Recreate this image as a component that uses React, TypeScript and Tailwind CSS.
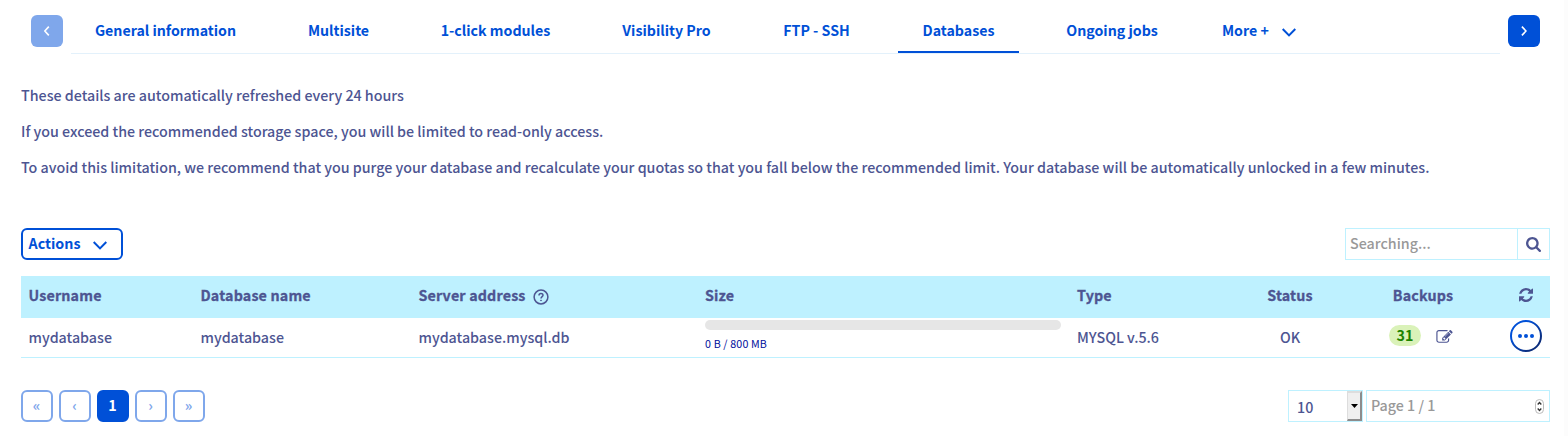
import React from "react";

type Tab = { label: string; width: string; active?: boolean };

const tabs: Tab[] = [
  { label: "General information", width: "w-[189px]" },
  { label: "Multisite", width: "w-[109px]" },
  { label: "1-click modules", width: "w-[157px]" },
  { label: "Visibility Pro", width: "w-[137px]" },
  { label: "FTP - SSH", width: "w-[115px]" },
  { label: "Databases", width: "w-[121px]", active: true },
  { label: "Ongoing jobs", width: "w-[132px] pl-[6px]" },
];

function ChevronDown() {
  return (
    <svg width="14" height="9" viewBox="0 0 14 9" fill="none" stroke="#0050d7" strokeWidth="2">
      <path d="M0.7 1 L7 7.4 L13.3 1" />
    </svg>
  );
}

function ArrowButton({ direction, disabled }: { direction: "left" | "right"; disabled?: boolean }) {
  return (
    <button
      className={`flex h-8 w-8 items-center justify-center rounded-[6px] ${disabled ? "bg-[#7fa7eb]" : "bg-[#0050d7]"}`}
      aria-label={direction}
    >
      <svg width="6" height="10" viewBox="0 0 6 10" fill="none" stroke="#fff" strokeWidth="1.6">
        <path d={direction === "left" ? "M4.8 0.6 L0.8 5 L4.8 9.4" : "M0.900 0.6 L5 5 L0.900 9.4"} />
      </svg>
    </button>
  );
}

function PageButton({ children, current }: { children: React.ReactNode; current?: boolean }) {
  return (
    <button
      className={`flex h-8 w-8 items-center justify-center rounded-[6px] border-2 pr-px pb-[2px] text-[14.3px] font-bold ${
        current ? "border-[#0050d7] bg-[#0050d7] text-white" : "border-[#7fa7eb] bg-white text-[#7fa7eb]"
      }`}
    >
      {children}
    </button>
  );
}

export default function App() {
  return (
    <div className="h-[436px] w-[1568px] overflow-hidden border-r-4 border-[#fcfcfc] bg-white pt-[15px] pl-[21px] font-['Noto_Sans_CJK_SC',sans-serif] text-[14.28px] leading-5 font-medium text-[#4d5592]">
      <nav className="flex h-[39px] pl-[10px]">
        <ArrowButton direction="left" disabled />
        <ul className="ml-2 flex w-[1429px] gap-6 border-b border-[#e3f1fb] text-[14.2px] font-bold text-[#0050d7]">
          {tabs.map((t) => (
            <li
              key={t.label}
              className={`${t.width} flex h-[38px] justify-center whitespace-nowrap border-b-2 pt-[5px] ${
                t.active ? "border-[#0050d7]" : "border-transparent"
              }`}
            >
              {t.label}
            </li>
          ))}
          <li className="flex h-[38px] whitespace-nowrap pt-[5px] pl-[23px]">
            More +
            <span className="mt-[8px] ml-[13px]">
              <ChevronDown />
            </span>
          </li>
        </ul>
        <div className="ml-2">
          <ArrowButton direction="right" />
        </div>
      </nav>

      <section className="mt-[31px] flex flex-col gap-4 whitespace-nowrap">
        <p>These details are automatically refreshed every 24 hours</p>
        <p>If you exceed the recommended storage space, you will be limited to read-only access.</p>
        <p>
          To avoid this limitation, we recommend that you purge your database and recalculate your quotas so that you
          fall below the recommended limit. Your database will be automatically unlocked in a few minutes.
        </p>
      </section>

      <div className="mt-[51px] flex w-[1529px] justify-between">
        <button className="flex h-8 w-[102px] rounded-[6px] border-2 border-[#0050d7] pt-[3px] pl-[5.500px] font-bold text-[#0050d7]">
          Actions
          <span className="mt-[8px] ml-[13px]">
            <ChevronDown />
          </span>
        </button>
        <div className="flex h-8 w-[205px] border border-[#bef1ff]">
          <input
            className="w-[172px] border-r border-[#bef1ff] pb-[2px] pl-1 placeholder:text-[#999] placeholder:opacity-100"
            placeholder="Searching..."
          />
          <button className="flex flex-1 items-center justify-center" aria-label="Search">
            <svg width="15" height="15" viewBox="0 128 1664 1664" fill="#4d5592">
              <path d="M1152 832q0-185-131.500-316.500T704 384 387.500 515.500 256 832t131.500 316.500T704 1280t316.500-131.500T1152 832zm512 832q0 52-38 90t-90 38q-54 0-90-38l-343-342q-179 124-399 124-143 0-273.500-55.500t-225-150-150-225T0 832t55.500-273.500 150-225 225-150T704 128t273.500 55.500 225 150 150 225T1408 832q0 220-124 399l343 343q37 37 37 90z" />
            </svg>
          </button>
        </div>
      </div>

      <div className="mt-4 w-[1529px]">
        <div className="grid h-[42px] grid-cols-[172px_218px_286px_372px_164px_114px_152px_51px] bg-[#bef1ff] pt-[9px] font-bold tracking-[0.17px] [-webkit-text-stroke:0.3px_#4d5592]">
          <span className="pl-[7.500px]">Username</span>
          <span className="pl-[7.500px]">Database name</span>
          <span className="flex pl-[7.500px]">
            Server address
            <svg className="mt-[4px] ml-[7px]" width="16" height="16" viewBox="0 0 16 16" fill="none" stroke="#4d5592">
              <circle cx="8" cy="8" r="6.9" strokeWidth="1.5" />
              <path d="M6 6.4 C6 3.8 10 3.9 10 6.2 C10 7.6 8 7.6 8 9.4" strokeWidth="1.5" />
              <circle cx="8" cy="11.4" r="0.5" strokeWidth="0.8" fill="#4d5592" />
            </svg>
          </span>
          <span className="pl-2">Size</span>
          <span className="pl-2">Type</span>
          <span className="text-center">Status</span>
          <span className="text-center">Backups</span>
          <svg className="mt-[3px] ml-[20px] h-[14px] w-[14px]" viewBox="0 0 1536 1536" fill="#4d5592">
            <path d="M1511 928q0 5-1 7-64 268-268 434.500T764 1536q-146 0-282.500-55T238 1324l-129 129q-19 19-45 19t-45-19-19-45V960q0-26 19-45t45-19h448q26 0 45 19t19 45-19 45l-137 137q71 66 161 102t187 36q134 0 250-65t186-179q11-17 53-117 8-23 30-23h192q13 0 22.500 9.500t9.500 22.500zM1536 128v448q0 26-19 45t-45 19h-448q-26 0-45-19t-19-45 19-45l138-138Q969 256 768 256q-134 0-250 65T332 500q-11 17-53 117-8 23-30 23H50q-13 0-22.500-9.500T18 608v-7q65-268 270-434.500T768 0q146 0 284 55.500T1297 212l130-129q19-19 45-19t45 19 19 45z" />
          </svg>
        </div>
        <div className="grid h-10 grid-cols-[172px_218px_286px_372px_164px_114px_147px_56px] border-b border-[#bef1ff]">
          <span className="pt-[9px] pl-[7.500px]">mydatabase</span>
          <span className="pt-[9px] pl-[7.500px]">mydatabase</span>
          <span className="pt-[9px] pl-[7.500px]">mydatabase.mysql.db</span>
          <div className="pt-[2px] pl-2">
            <div className="h-[10px] w-[356px] rounded-full bg-[#e6e6e6]" />
            <div className="mt-[6px] text-[10.7px] leading-4 font-normal tracking-[0.15px] text-[#000e9c]">
              0 B / 800 MB
            </div>
          </div>
          <span className="pt-[9px] pl-2">MYSQL v.5.6</span>
          <span className="pt-[9px] text-center">OK</span>
          <div className="flex pt-[7px] pl-[42px]">
            <span className="flex h-[21px] w-8 justify-center rounded-full bg-[#daf2b9] font-bold text-[#1f8300]">31</span>
            <svg className="mt-[5px] ml-[15px]" width="17" height="14" viewBox="0 0 1792 1536" fill="#4d5592">
              <path d="M888 1056l116-116-152-152-116 116v56h96v96h56zm440-720q-16-16-33 1L945 687q-17 17-1 33t33-1l350-350q17-17 1-33zm80 594v190q0 119-84.500 203.500T1120 1408H288q-119 0-203.500-84.500T0 1120V288Q0 169 84.500 84.500T288 0h832q63 0 117 25 15 7 18 23 3 17-9 29l-49 49q-14 14-32 8-23-6-45-6H288q-66 0-113 47t-47 113v832q0 66 47 113t113 47h832q66 0 113-47t47-113V994q0-13 9-22l64-64q15-15 35-7t20 29zm-96-738l288 288-672 672H640V864zm444 132l-92 92-288-288 92-92q28-28 68-28t68 28l152 152q28 28 28 68t-28 68z" />
            </svg>
          </div>
          <button className="mt-[2px] ml-4 h-8 w-8" aria-label="Actions menu">
            <svg width="32" height="32" viewBox="0 0 32 32">
              <defs>
                <linearGradient id="ring" x1="0" y1="0" x2="1" y2="1">
                  <stop offset="0.3" stopColor="#0050d7" />
                  <stop offset="0.8" stopColor="#0b2d7d" />
                </linearGradient>
              </defs>
              <circle cx="16" cy="16" r="15" fill="none" stroke="url(#ring)" strokeWidth="2" />
              <circle cx="10" cy="16" r="2" fill="#0050d7" />
              <circle cx="16" cy="16" r="2" fill="#0050d7" />
              <circle cx="22" cy="16" r="2" fill="#0050d7" />
            </svg>
          </button>
        </div>
      </div>

      <div className="mt-8 flex w-[1529px] justify-between">
        <div className="flex gap-[6px]">
          <PageButton>«</PageButton>
          <PageButton>‹</PageButton>
          <PageButton current>1</PageButton>
          <PageButton>›</PageButton>
          <PageButton>»</PageButton>
        </div>
        <div className="flex gap-[3px]">
          <div className="flex h-8 w-[75px] justify-between border border-[#bef1ff]">
            <span className="pt-[6px] pl-[8px]">10</span>
            <span className="flex w-[15px] items-center justify-center border-t-2 border-r-2 border-b-2 border-l border-t-[#ddd] border-r-[#8c8c8c] border-b-[#8c8c8c] border-l-[#ddd] bg-[#efefef]">
              <svg width="7" height="4" viewBox="0 0 7 4">
                <path d="M0 0 H7 L3.500 4 Z" fill="#000" />
              </svg>
            </span>
          </div>
          <div className="flex h-8 w-[184px] items-center border border-[#bef1ff] pr-[4px]">
            <input
              className="h-full min-w-0 flex-1 pb-[3px] pl-1 placeholder:text-[#999] placeholder:opacity-100"
              placeholder="Page 1 / 1"
            />
            <svg width="10" height="15" viewBox="0 0 10 15" fill="none">
              <rect x="0.5" y="0.5" width="8" height="14" rx="4" stroke="#bbb" />
              <path d="M2.700 5.500 L4.500 3.500 L6.300 5.500 M2.700 9.500 L4.500 11.500 L6.300 9.500" stroke="#333" strokeWidth="1.300" />
            </svg>
          </div>
        </div>
      </div>
    </div>
  );
}
